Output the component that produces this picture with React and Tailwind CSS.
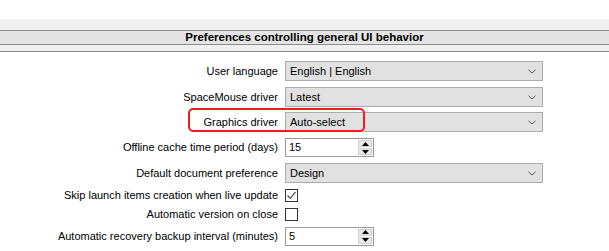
import React from "react";

const font = { fontFamily: '"Liberation Sans", Arial, sans-serif' };

function Chevron() {
  return (
    <svg width="8" height="5" viewBox="0 0 8 5" className="shrink-0">
      <path d="M0.5 0.8 L4 4 L7.5 0.8" fill="none" stroke="#5a5a5a" strokeWidth="1" />
    </svg>
  );
}

function Select({ value }) {
  return (
    <div className="flex h-full w-[258px] items-center justify-between border border-[#adadad] bg-[#e1e1e1] pl-[4px] pr-[6px] text-[11px] text-black">
      <span>{value}</span>
      <Chevron />
    </div>
  );
}

function Spin({ value }) {
  return (
    <div className="flex h-full w-[89px] border border-[#9a9a9a] bg-white text-[11px] text-black">
      <div className="flex flex-1 items-center pl-[3px]">{value}</div>
      <div className="flex w-[15px] flex-col gap-[1px] py-[1px] pr-[1px]">
        <div className="flex flex-1 items-center justify-center border border-[#d0d0d0] bg-[#e9e9e9]">
          <svg width="7" height="4" viewBox="0 0 7 4">
            <path d="M0 4 L3.5 0 L7 4 Z" fill="#000" />
          </svg>
        </div>
        <div className="flex flex-1 items-center justify-center border border-[#d0d0d0] bg-[#e9e9e9]">
          <svg width="7" height="4" viewBox="0 0 7 4">
            <path d="M0 0 L3.5 4 L7 0 Z" fill="#000" />
          </svg>
        </div>
      </div>
    </div>
  );
}

function Checkbox({ checked }) {
  return (
    <div className="flex h-[13px] w-[13px] items-center justify-center border border-[#333] bg-white">
      {checked && (
        <svg width="11" height="11" viewBox="0 0 11 11">
          <path d="M1.5 5.5 L4.2 8.3 L9.5 2" fill="none" stroke="#555" strokeWidth="1.3" />
        </svg>
      )}
    </div>
  );
}

function Row({ label, children, className }) {
  return (
    <div className={`grid grid-cols-[278px_auto] items-center gap-x-[7px] ${className}`}>
      <div className="whitespace-nowrap text-right text-[11px] text-black">{label}</div>
      <div className="flex h-full items-center">{children}</div>
    </div>
  );
}

export default function App() {
  return (
    <div className="relative h-[251px] w-[609px] overflow-hidden bg-white" style={font}>
      <div className="h-[19px]" />
      <div className="h-[11px] bg-[#f0f0f0]" />
      <div className="flex h-[15px] items-center justify-center border-y border-[#8c8c8c] bg-[#e4e4e4] text-[11.5px] font-bold text-black">
        Preferences controlling general UI behavior
      </div>
      <div className="h-[7px] border-b border-[#8c8c8c] bg-[#f0f0f0]" />

      <div className="flex flex-col pt-[9px]">
        <Row label="User language" className="mb-[6px] h-[20px]">
          <Select value="English | English" />
        </Row>
        <Row label="SpaceMouse driver" className="mb-[5px] h-[20px]">
          <Select value="Latest" />
        </Row>
        <Row label="Graphics driver" className="mb-[6px] h-[20px]">
          <Select value="Auto-select" />
        </Row>
        <Row label="Offline cache time period (days)" className="mb-[6px] h-[19px]">
          <Spin value="15" />
        </Row>
        <Row label="Default document preference" className="mb-[3px] h-[20px]">
          <Select value="Design" />
        </Row>
        <Row label="Skip launch items creation when live update" className="mb-[1px] h-[18px]">
          <Checkbox checked />
        </Row>
        <Row label="Automatic version on close" className="mb-[3px] h-[19px]">
          <Checkbox />
        </Row>
        <Row label="Automatic recovery backup interval (minutes)" className="h-[17px]">
          <Spin value="5" />
        </Row>
      </div>

      <div className="pointer-events-none absolute left-[188px] top-[108px] h-[24px] w-[177px] rounded-[5px] border-2 border-[#ee1c1c]" />
    </div>
  );
}
